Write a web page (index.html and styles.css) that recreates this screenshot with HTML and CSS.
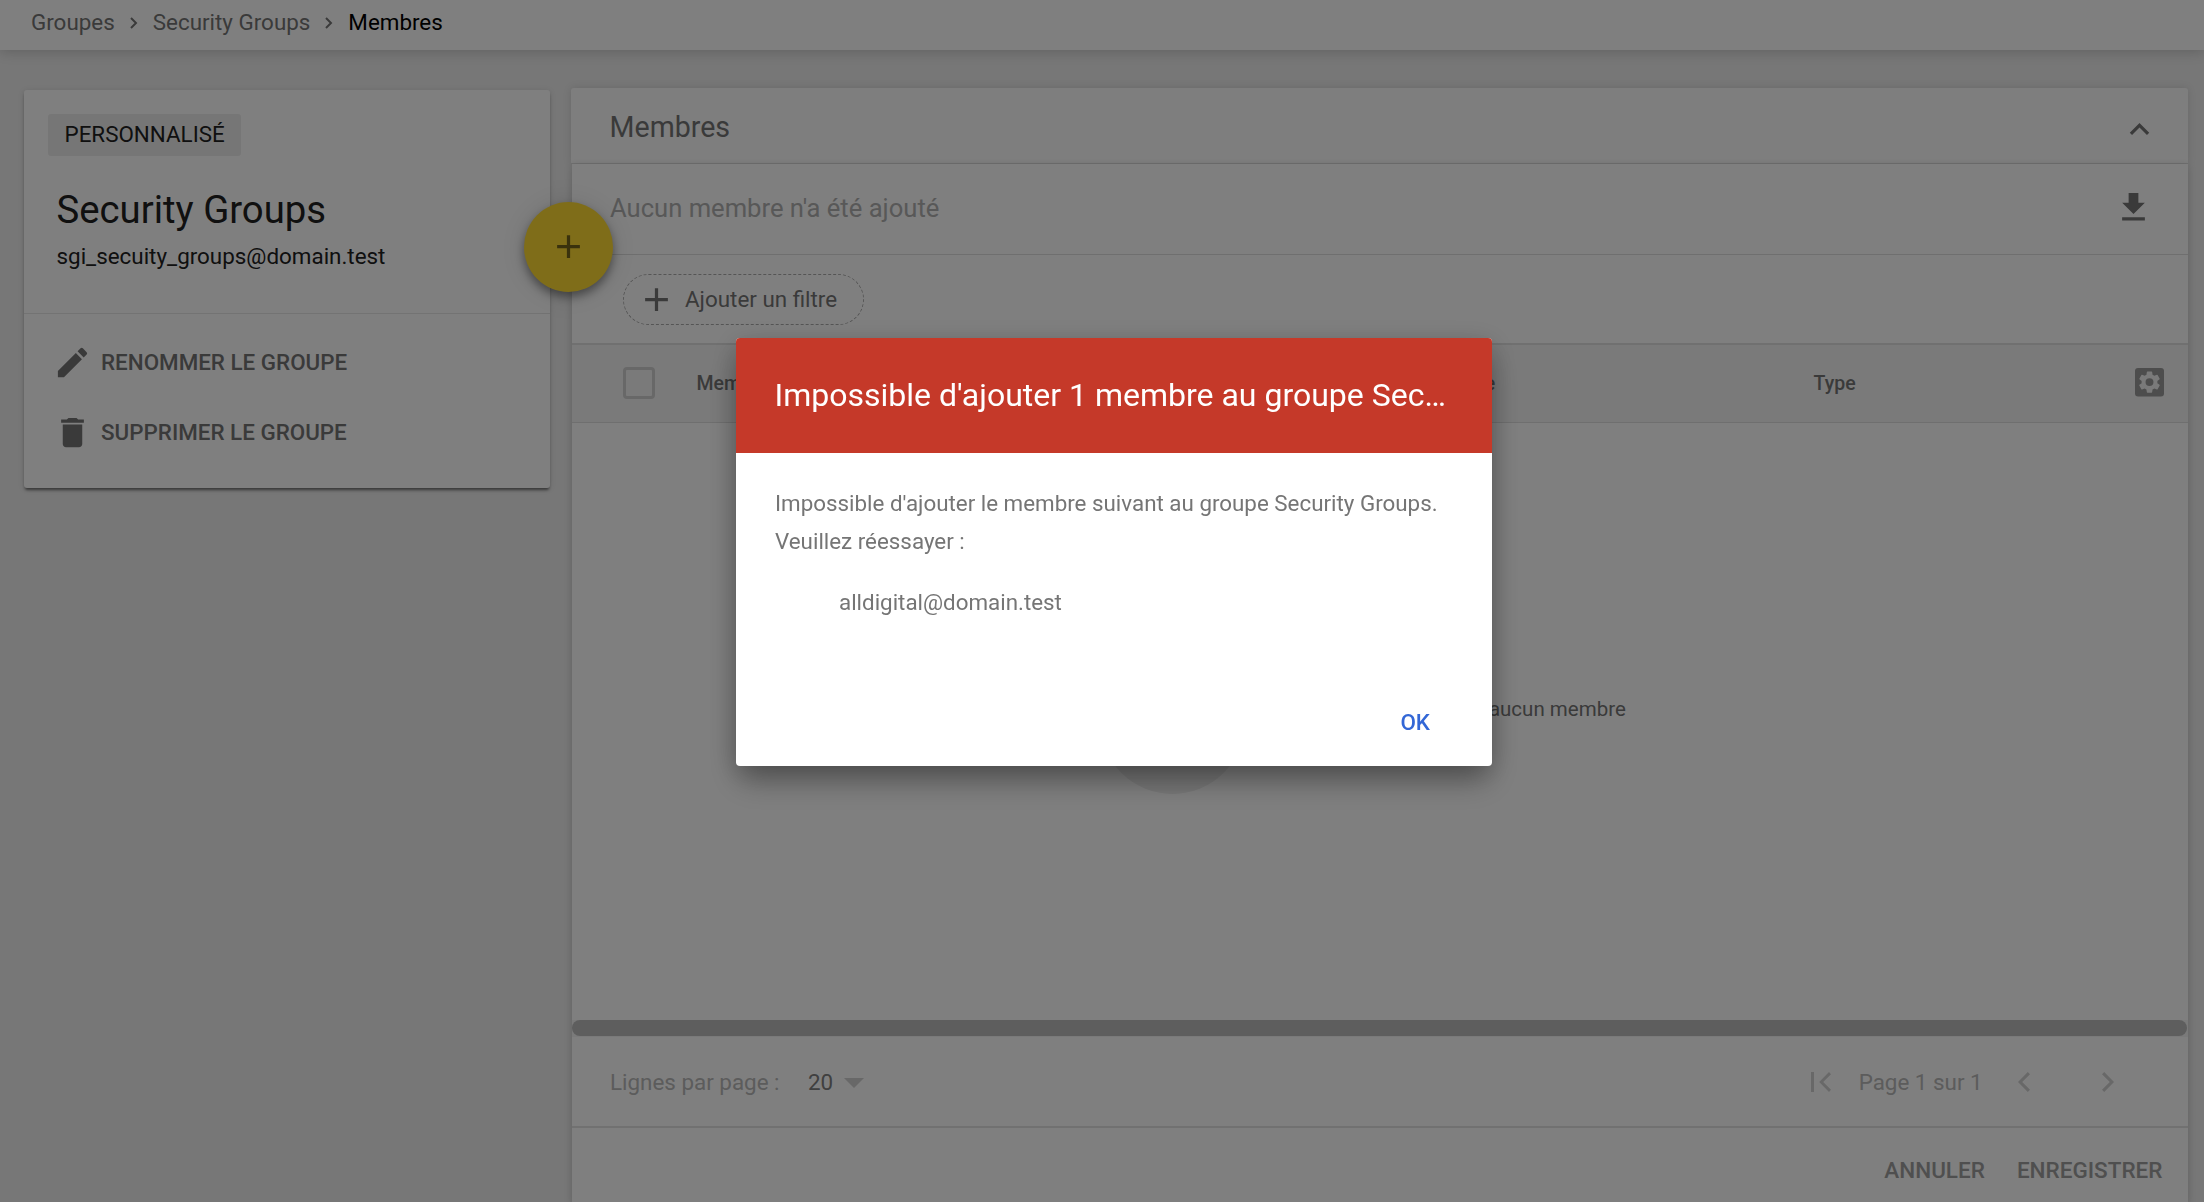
FILE: index.html
```html
<!DOCTYPE html>
<html lang="fr">
<head>
<meta charset="utf-8">
<title>Membres - Security Groups</title>
<link rel="stylesheet" href="styles.css">
</head>
<body>
<div class="app">
  <nav class="topbar">
    <a class="crumb">Groupes</a>
    <svg class="sep" viewBox="0 0 8 12"><path d="M1 1l5 5-5 5"/></svg>
    <a class="crumb">Security Groups</a>
    <svg class="sep" viewBox="0 0 8 12"><path d="M1 1l5 5-5 5"/></svg>
    <span class="crumb current">Membres</span>
  </nav>
  <div class="content">
    <aside class="card">
      <div class="card-head">
        <span class="badge">PERSONNALISÉ</span>
        <h1 class="group-name">Security Groups</h1>
        <p class="group-mail">sgi_secuity_groups@domain.test</p>
      </div>
      <div class="card-actions">
        <button class="action"><svg class="icon" viewBox="0 0 24 24"><path d="M3 17.25V21h3.75L17.81 9.94l-3.75-3.75L3 17.25zM20.71 7.04a1 1 0 0 0 0-1.41l-2.34-2.34a1 1 0 0 0-1.41 0l-1.83 1.83 3.75 3.75 1.83-1.83z"/></svg><span>RENOMMER LE GROUPE</span></button>
        <button class="action"><svg class="icon" viewBox="0 0 24 24"><path d="M6 19c0 1.1.9 2 2 2h8c1.1 0 2-.9 2-2V7H6v12zM19 4h-3.500l-1-1h-5l-1 1H5v2h14V4z"/></svg><span>SUPPRIMER LE GROUPE</span></button>
      </div>
      <button class="fab"><svg class="icon" viewBox="0 0 24 24"><path d="M19 13h-6v6h-2v-6H5v-2h6V5h2v6h6v2z"/></svg></button>
    </aside>
    <main class="panel">
      <header class="panel-head">
        <h2 class="panel-title">Membres</h2>
        <svg class="icon up" viewBox="0 0 24 24"><path d="M12 8l-6 6 1.410 1.410L12 10.830l4.590 4.580L18 14z"/></svg>
      </header>
      <div class="panel-body">
        <div class="status">
          <span class="status-text">Aucun membre n'a été ajouté</span>
          <svg class="icon" viewBox="0 0 24 24"><path d="M19 9h-4V3H9v6H5l7 7 7-7zM5 18v2h14v-2H5z"/></svg>
        </div>
        <div class="filters">
          <button class="chip"><svg class="icon" viewBox="0 0 24 24"><path d="M19 13h-6v6h-2v-6H5v-2h6V5h2v6h6v2z"/></svg><span>Ajouter un filtre</span></button>
        </div>
        <div class="thead">
          <span class="check"></span>
          <span class="th name">Membre</span>
          <span class="th addr">Adresse</span>
          <span class="th type">Type</span>
          <svg class="gear" viewBox="0 0 29 29"><rect width="29" height="28.500" rx="3"/><path class="cog" transform="translate(1.300 .9) scale(1.100)" d="M19.140 12.940c.04-.3.06-.61.06-.94s-.02-.64-.07-.94l2.030-1.580a.49.49 0 0 0 .12-.61l-1.920-3.320a.49.49 0 0 0-.59-.22l-2.390.96a7 7 0 0 0-1.620-.94l-.36-2.540a.48.48 0 0 0-.48-.41h-3.840a.47.47 0 0 0-.47.41l-.36 2.540c-.59.24-1.130.57-1.620.94l-2.390-.96a.48.48 0 0 0-.59.22L2.740 8.870a.47.47 0 0 0 .12.61l2.030 1.580c-.05.3-.09.63-.09.94s.02.64.07.94l-2.030 1.580a.49.49 0 0 0-.12.61l1.920 3.320c.12.22.37.29.59.22l2.390-.96c.5.38 1.030.7 1.620.94l.36 2.540c.05.24.24.41.48.41h3.840c.24 0 .44-.17.47-.41l.36-2.540a7 7 0 0 0 1.620-.94l2.390.96c.22.08.47 0 .59-.22l1.920-3.320a.47.47 0 0 0-.12-.61l-2.010-1.580zM12 15.600a3.600 3.600 0 1 1 0-7.200 3.600 3.600 0 0 1 0 7.200z"/></svg>
        </div>
        <div class="empty">
          <span class="empty-disc"></span>
          <span class="empty-text">Ce groupe ne contient aucun membre</span>
        </div>
        <div class="scroll"><div class="thumb"></div></div>
        <div class="pager">
          <span class="rows-label">Lignes par page :</span>
          <span class="rows-count">20</span>
          <svg class="caret" viewBox="0 0 20 10"><path d="M0 0h20L10 10z"/></svg>
          <svg class="first" viewBox="0 0 20 20"><path d="M0 0h3v20H0zM18 0l2 2.200L12.200 10l7.800 7.800-2 2.200L8.200 10z"/></svg>
          <span class="page">Page 1 sur 1</span>
          <svg class="prev" viewBox="0 0 12 20"><path d="M9.800 0L12 2.200 4.200 10l7.800 7.800L9.800 20 0 10z"/></svg>
          <svg class="next" viewBox="0 0 12 20"><path d="M2.200 0L0 2.200 7.800 10 0 17.800 2.200 20 12 10z"/></svg>
        </div>
        <footer class="buttons">
          <button class="cancel">ANNULER</button>
          <button class="save">ENREGISTRER</button>
        </footer>
      </div>
    </main>
  </div>
</div>
<div class="overlay">
  <div class="dialog" role="dialog">
    <header class="dialog-head"><h2 class="dialog-title">Impossible d'ajouter 1 membre au groupe Sec…</h2></header>
    <div class="dialog-body">
      <p class="msg">Impossible d'ajouter le membre suivant au groupe Security Groups.<br>Veuillez réessayer :</p>
      <p class="failed">alldigital@domain.test</p>
    </div>
    <div class="dialog-foot"><button class="ok">OK</button></div>
  </div>
</div>
</body>
</html>
```
FILE: styles.css
```css
* { box-sizing: border-box; }
body { margin: 0; font-family: Roboto, "Liberation Sans", sans-serif; font-size: 22.4px; color: #212121; }
h1, h2, p { margin: 0; font-weight: 400; }
button { border: 0; padding: 0; background: none; font: inherit; color: inherit; }
svg { display: block; flex: none; }
.app { height: 1202px; overflow: hidden; background: #eee; display: flex; flex-direction: column; white-space: nowrap; }
.icon { width: 39px; height: 39px; fill: #757575; }

.topbar { height: 50px; flex: none; display: flex; align-items: center; padding: 0 30px 6px 31px; background: #fff; box-shadow: 0 2px 12px rgba(0,0,0,.18); z-index: 1; }
.crumb { color: #757575; }
.current { color: #000; }
.sep { width: 8px; height: 12px; margin: 1px 15px 0; fill: none; stroke: #757575; stroke-width: 2; }

.content { flex: 1; display: flex; align-items: flex-start; padding: 38px 16px 0 24px; gap: 21px; }
.card { position: relative; width: 526px; height: 398px; margin-top: 2px; background: #fff; border-radius: 3px; box-shadow: 0 3px 3px -1px rgba(0,0,0,.5), 0 1px 6px rgba(0,0,0,.12); }
.card-head { height: 224px; padding: 24px 24px 0; border-bottom: 1px solid #e6e6e6; }
.badge { display: block; width: 193px; height: 42px; line-height: 40px; padding-left: 16.5px; background: #ededed; border-radius: 3px; }
.group-name { margin: 29px 0 0 8.5px; font-size: 38.3px; line-height: 50px; }
.group-mail { margin: 6px 0 0 8.5px; line-height: 30px; }
.card-actions { padding: 13px 0 0 29px; }
.action { display: flex; align-items: center; height: 70px; gap: 9px; color: #757575; font-weight: 500; }
.fab { position: absolute; left: 500px; top: 112px; width: 89px; height: 90px; display: grid; place-items: center; border-radius: 50%; background: #ffdb33; box-shadow: 0 5px 10px rgba(0,0,0,.4), 0 2px 30px rgba(0,0,0,.12); z-index: 2; }
.fab .icon { fill: #75651a; margin-bottom: 1px; }

.panel { width: 1617px; height: 1114px; display: flex; flex-direction: column; }
.panel-head { height: 76px; flex: none; display: flex; align-items: center; justify-content: space-between; padding: 0 29px 0 38.5px; background: #fdfdfd; border-bottom: 1px solid #e0e0e0; border-radius: 3px 3px 0 0; box-shadow: 0 0 8px rgba(0,0,0,.12); }
.panel-title { font-size: 28.6px; color: #757575; margin-top: 3px; }
.up { margin-top: 8px; }
.panel-body { flex: 1; margin-left: 1px; display: flex; flex-direction: column; background: #fff; box-shadow: 0 2px 8px rgba(0,0,0,.2); }
.status { height: 91px; flex: none; display: flex; align-items: center; justify-content: space-between; padding: 0 35px 3px 38px; border-bottom: 1px solid #dedede; }
.status-text { font-size: 25.6px; color: #b0b0b0; }
.filters { height: 88px; flex: none; padding: 19px 0 0 51px; }
.chip { display: flex; align-items: center; width: 241px; height: 51px; padding-left: 13px; border: 1px dashed #aaa; border-radius: 26px; color: #757575; }
.chip span { margin: 0 0 2px 9px; }
.thead { height: 80px; flex: none; display: flex; align-items: center; padding-left: 51px; background: #f5f5f5; border-top: 2px solid #e0e0e0; border-bottom: 1px solid #dedede; }
.check { width: 32px; height: 32px; margin-top: -2px; border: 3px solid #d0d0d0; border-radius: 4px; }
.th { font-size: 19.5px; font-weight: 500; color: #757575; }
.name { margin-left: 41.5px; width: 727px; }
.addr { width: 390px; }
.type { width: 321.5px; }
.gear { width: 29px; height: 29px; margin-top: -2px; fill: #9a9a9a; }
.cog { fill: #f5f5f5; }
.empty { flex: 1; display: flex; align-items: center; justify-content: center; padding-right: 34px; }
.empty-disc { width: 145px; height: 145px; border-radius: 50%; background: #eee; }
.empty-text { font-size: 20.5px; margin: 0 0 25px 39px; color: #757575; }
.scroll { height: 17px; flex: none; background: #f4f4f4; }
.thumb { width: 1615px; height: 16px; border-radius: 8px; background: #bcbcbc; }
.pager { height: 91px; flex: none; display: flex; align-items: center; padding-left: 38px; border-bottom: 2px solid #e2e2e2; color: #b8b8b8; }
.rows-count { margin-left: 28.5px; color: #808080; }
.caret { width: 20px; height: 10px; margin: 2px 0 0 10.5px; fill: #d0d0d0; }
.first { width: 20px; height: 20px; margin-left: 947px; fill: #d0d0d0; }
.page { margin-left: 28px; }
.prev { width: 12px; height: 20px; margin-left: 35px; fill: #d0d0d0; }
.next { width: 12px; height: 20px; margin-left: 72.5px; fill: #d0d0d0; }
.buttons { height: 74px; flex: none; display: flex; justify-content: flex-end; align-items: center; gap: 32px; padding: 9px 25.5px 0 0; font-size: 22.5px; font-weight: 500; color: #9e9e9e; }

.overlay { position: fixed; inset: 0; z-index: 5; background: rgba(0,0,0,.5); display: flex; justify-content: center; align-items: flex-start; padding: 338px 0 0 24px; white-space: nowrap; }
.dialog { width: 756px; height: 428px; background: #fff; border-radius: 4px; overflow: hidden; display: flex; flex-direction: column; box-shadow: 0 18px 30px -4px rgba(0,0,0,.3), 0 6px 28px rgba(0,0,0,.2); }
.dialog-head { height: 115px; padding: 0 0 2px 38.5px; background: #c53929; display: flex; align-items: center; }
.dialog-title { font-size: 32px; color: #fff; }
.dialog-body { flex: 1; padding: 31px 39px 0; font-size: 22.37px; color: #757575; line-height: 38px; }
.failed { margin: 23px 0 0 64px; }
.dialog-foot { height: 87px; display: flex; justify-content: flex-end; padding: 0 62px 1px; align-items: center; color: #3367d6; font-weight: 500; }
```
